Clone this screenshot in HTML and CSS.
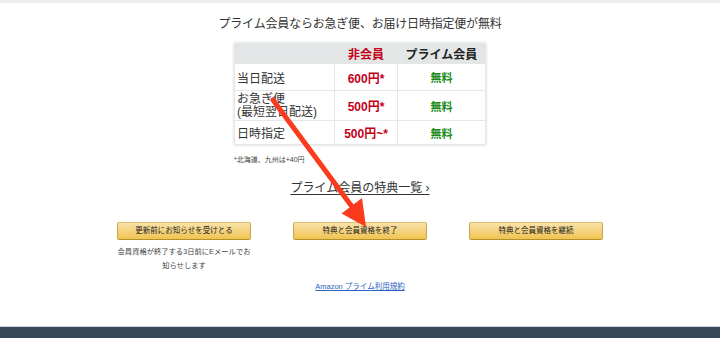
FILE: index.html
```html
<!DOCTYPE html>
<html lang="ja">
<head>
<meta charset="utf-8">
<link rel="stylesheet" href="styles.css">
</head>
<body>
<div class="topstrip"></div>
<main class="page">
  <h1 class="title">プライム会員ならお急ぎ便、お届け日時指定便が無料</h1>
  <table class="compare">
    <tr class="head">
      <th class="c1"></th>
      <th class="c2 red">非会員</th>
      <th class="c3">プライム会員</th>
    </tr>
    <tr class="r1">
      <td class="c1">当日配送</td>
      <td class="c2 price">600円*</td>
      <td class="c3 free">無料</td>
    </tr>
    <tr class="r2">
      <td class="c1 two">お急ぎ便<br>(最短翌日配送)</td>
      <td class="c2 price">500円*</td>
      <td class="c3 free">無料</td>
    </tr>
    <tr class="r3">
      <td class="c1">日時指定</td>
      <td class="c2 price">500円~*</td>
      <td class="c3 free">無料</td>
    </tr>
  </table>
  <p class="note">*北海道、九州は+40円</p>
  <p class="benefits"><a href="#">プライム会員の特典一覧 ›</a></p>
  <div class="actions">
    <div class="action">
      <button class="btn">更新前にお知らせを受けとる</button>
      <p class="desc">会員資格が終了する3日前にEメールでお知らせします</p>
    </div>
    <div class="action">
      <button class="btn">特典と会員資格を終了</button>
    </div>
    <div class="action">
      <button class="btn">特典と会員資格を継続</button>
    </div>
  </div>
  <p class="terms"><a href="#">Amazon プライム利用規約</a></p>
</main>
<footer class="footer"></footer>
<svg class="arrow" width="720" height="338" viewBox="0 0 720 338">
  <line x1="273" y1="100" x2="353" y2="208" stroke="#fb3b1d" stroke-width="5" stroke-linecap="round"/>
  <polygon points="366,227 341.5,213.5 362,198" fill="#fb3b1d"/>
</svg>
</body>
</html>
```
FILE: styles.css
```css
* { box-sizing: border-box; }
html, body { margin: 0; padding: 0; }
body {
  width: 720px;
  height: 338px;
  overflow: hidden;
  background: #fff;
  font-family: "Liberation Sans", "Noto Sans CJK JP", sans-serif;
  color: #333;
  position: relative;
}
.topstrip { height: 3px; background: #eeeeee; }
.page {
  height: 323px;
  display: flex;
  flex-direction: column;
  align-items: center;
}
.title {
  margin: 13px 0 0;
  font-size: 12px;
  font-weight: normal;
  line-height: 16px;
  color: #333;
  letter-spacing: -0.2px;
}
.compare {
  margin-top: 11px;
  width: 252px;
  border-collapse: collapse;
  box-shadow: 0 0 3px rgba(0,0,0,0.18);
  border: 1px solid #dcdcdc;
  font-size: 12px;
}
.compare th, .compare td {
  border: 1px solid #e6e6e6;
  padding: 0;
  vertical-align: middle;
}
.compare .c1 { width: 100px; text-align: left; padding-left: 2px; }
.compare .c2 { width: 63px; text-align: center; }
.compare .c3 { text-align: center; }
.compare .head { height: 20px; background: #e3e6e6; }
.compare .head th { font-size: 12px; font-weight: bold; color: #222; }
.compare .head th.red { color: #c40018; }
.compare .r1 { height: 27px; }
.compare .r2 { height: 30px; }
.compare .r3 { height: 24px; }
.compare td.c1 { font-size: 12px; color: #333; }
.compare td.two { line-height: 13px; }
.price { color: #c40018; font-weight: bold; font-size: 12px; }
.free { color: #1b8a1b; font-weight: bold; font-size: 11px; }
.note {
  align-self: flex-start;
  margin: 10px 0 0 234px;
  font-size: 7px;
  line-height: 10px;
  color: #444;
}
.benefits { margin: 15px 0 0; font-size: 12px; line-height: 16px; }
.benefits a { color: #333; text-decoration: underline; text-underline-offset: 2px; }
.actions {
  margin-top: 26px;
  display: flex;
  gap: 42px;
}
.action {
  width: 134px;
  display: flex;
  flex-direction: column;
  align-items: center;
}
.btn {
  width: 134px;
  height: 18px;
  padding: 0;
  border: 1px solid;
  border-color: #dbbd6c #cda64a #b7902e;
  border-radius: 2px;
  background: linear-gradient(#f8e2a9, #f0c452);
  font-family: "Liberation Sans", "Noto Sans CJK JP", sans-serif;
  font-size: 7.5px;
  color: #222;
  line-height: 16px;
}
.desc {
  margin: 5px 0 0;
  width: 136px;
  font-size: 7.3px;
  line-height: 14px;
  text-align: center;
  color: #444;
}
.terms { margin: 8px 0 0; font-size: 7.5px; line-height: 12px; }
.terms a { color: #2a62c0; text-decoration: underline; }
.footer {
  height: 12px;
  background: #37475a;
  border-top: 1px solid #c9d1db;
}
.arrow { position: absolute; left: 0; top: 0; pointer-events: none; }
```
